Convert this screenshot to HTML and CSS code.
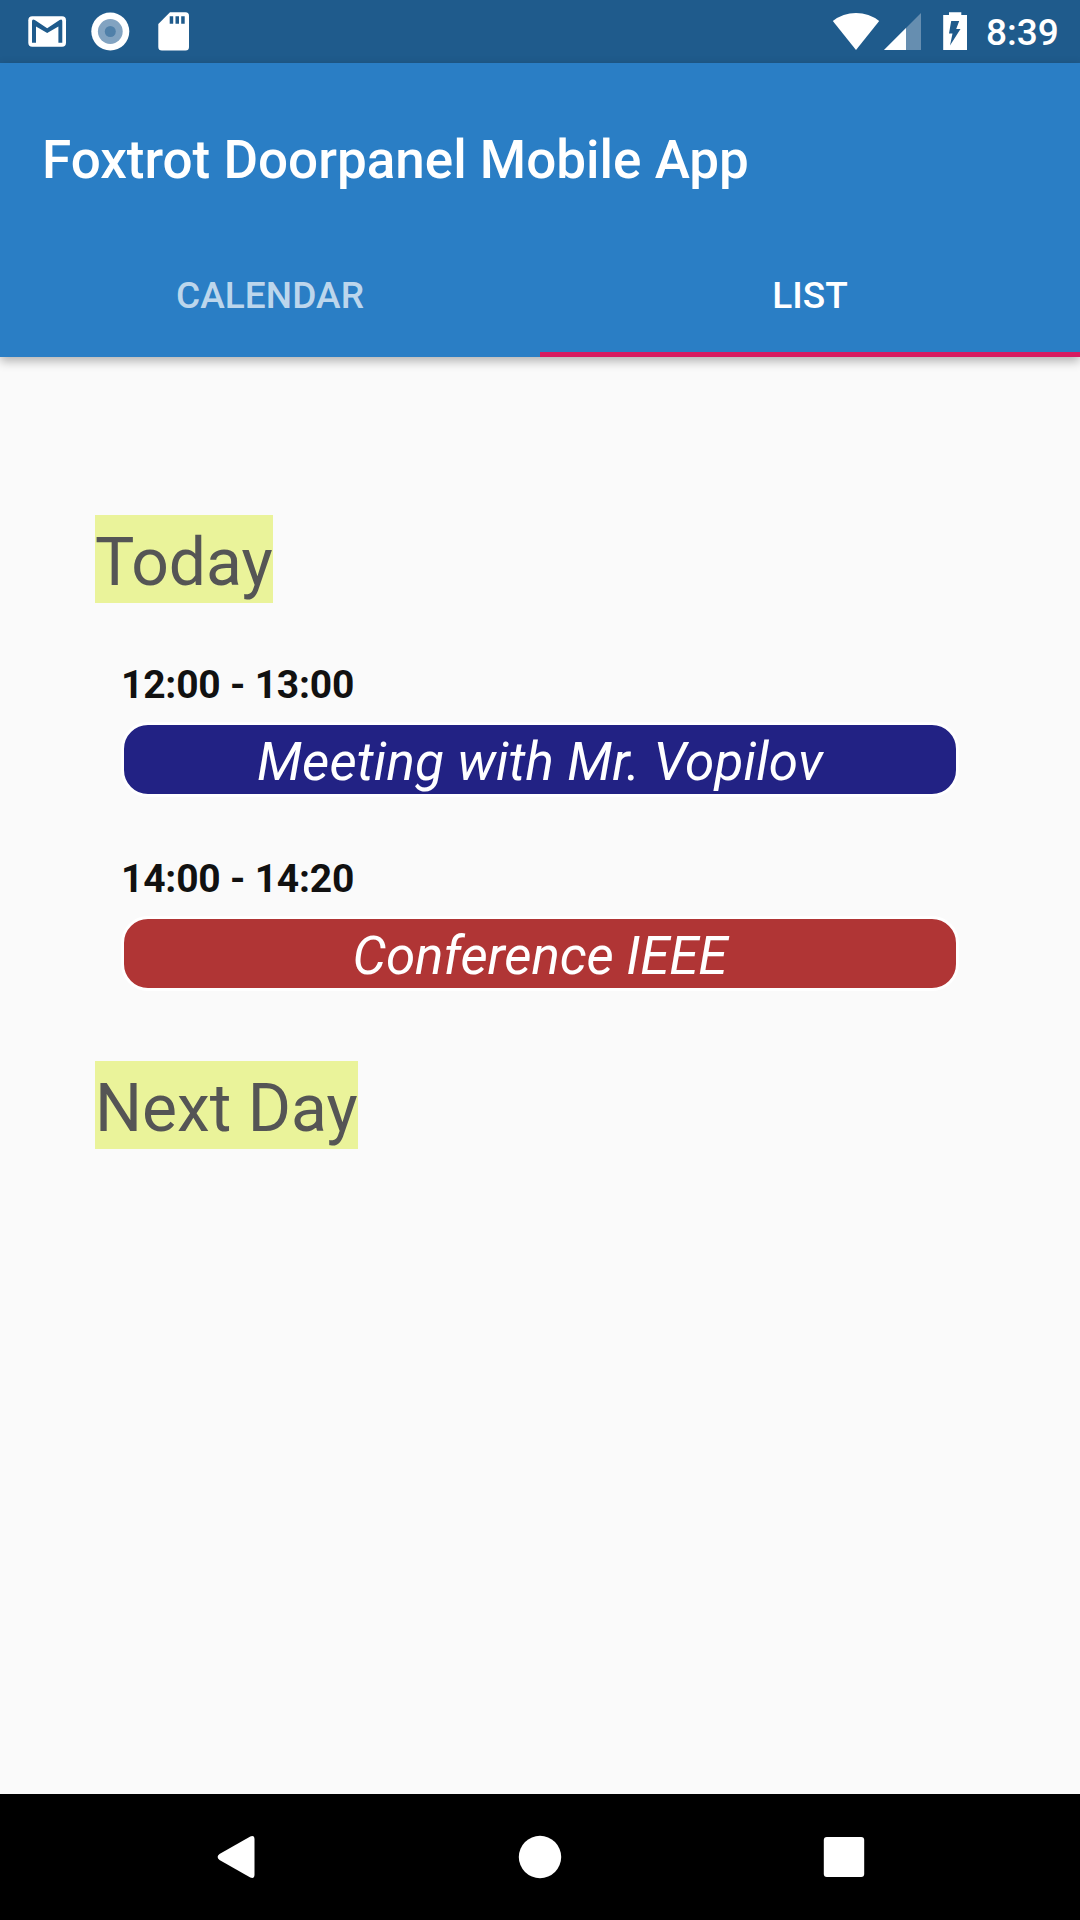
FILE: index.html
```html
<!DOCTYPE html>
<html lang="en">
<head>
<meta charset="utf-8">
<title>Foxtrot Doorpanel Mobile App</title>
<link rel="stylesheet" href="styles.css">
</head>
<body>
<div class="statusbar">
  <svg class="status-left" width="200" height="63" viewBox="0 0 200 63">
    <rect x="28.3" y="16.2" width="37.7" height="30.6" rx="4" fill="#fff"/>
    <path class="cut" d="M32 42.7V21.5Q32 18.4 34.8 20L47.2 28.2L59.6 20Q62.3 18.4 62.3 21.5V42.7H58.4V26.5L47.2 33L36 26.5V42.7Z"/>
    <circle cx="110.3" cy="31.5" r="19" fill="#fff"/>
    <circle cx="110.3" cy="31.5" r="12.4" fill="#82a3c1"/>
    <circle cx="110.3" cy="31.5" r="5.5" fill="#5080a9"/>
    <path d="M170 12.3H185.5Q189 12.3 189 15.8V47Q189 50.5 185.5 50.5H162Q158.300 50.5 158.300 47V24Z" fill="#fff"/>
    <path class="cut" d="M169.700 16.200h3.500v7.500h-3.500zM175.500 16.200h3.500v7.500h-3.500zM181.200 16.200h3.500v7.500h-3.500z"/>
  </svg>
  <div class="status-right">
    <svg width="140" height="63" viewBox="830 0 140 63">
      <path d="M856 50L832.800 21Q843 13 856 13T879.200 21Z" fill="#fff"/>
      <path d="M884 50L921 13V50Z" fill="#668eb0"/>
      <path d="M884 50L906 28V50Z" fill="#fff"/>
      <path d="M943.200 15H949V12.200H961.300V15H967V50H943.200Z" fill="#fff"/>
      <path class="cut" d="M951.200 21H959.200L956.200 29H960.500L950 45.500L952.500 33.500H949Z"/>
    </svg>
    <span class="clock">8:39</span>
  </div>
</div>
<header class="appbar">
  <h1 class="title">Foxtrot Doorpanel Mobile App</h1>
  <nav class="tabs">
    <span class="tab">CALENDAR</span>
    <span class="tab active">LIST</span>
  </nav>
</header>
<main class="agenda">
  <h2 class="day">Today</h2>
  <section class="event">
    <div class="time">12:00 - 13:00</div>
    <div class="pill blue">Meeting with Mr. Vopilov</div>
  </section>
  <section class="event">
    <div class="time">14:00 - 14:20</div>
    <div class="pill red">Conference IEEE</div>
  </section>
  <h2 class="day next">Next Day</h2>
</main>
<footer class="navbar">
  <svg width="1080" height="126" viewBox="0 1794 1080 126" fill="#fff">
    <path d="M250.300 1836.500Q254.500 1834.800 254.500 1839.500V1874.500Q254.500 1879.300 250.300 1877.500L219.500 1860Q215.700 1857 219.500 1854Z"/>
    <circle cx="540" cy="1857" r="21.200"/>
    <rect x="823.800" y="1837" width="40.400" height="40" rx="3"/>
  </svg>
</footer>
</body>
</html>
```

FILE: styles.css
```css
* { box-sizing: border-box; }

body {
  margin: 0;
  width: 1080px;
  height: 1920px;
  display: flex;
  flex-direction: column;
  background: #fafafa;
  font-family: Roboto, sans-serif;
  overflow: hidden;
}

svg { display: block; }

.statusbar {
  height: 63px;
  flex: none;
  display: flex;
  justify-content: space-between;
  background: #1f5b8c;
}

.cut { fill: #1f5b8c; }

.status-right {
  display: flex;
  width: 250px;
}

.clock {
  margin-left: 16px;
  font-size: 37px;
  font-weight: 500;
  line-height: 66px;
  color: #fff;
}

.appbar {
  height: 294px;
  flex: none;
  display: flex;
  flex-direction: column;
  background: #2a7ec5;
  color: #fff;
  box-shadow: 0 4px 10px rgba(0, 0, 0, 0.3);
}

.title {
  margin: 0;
  padding-left: 42px;
  height: 168px;
  font-size: 53px;
  font-weight: 500;
  line-height: 194px;
  white-space: nowrap;
}

.tabs {
  display: flex;
  height: 126px;
}

.tab {
  flex: 1;
  text-align: center;
  font-size: 37px;
  font-weight: 500;
  line-height: 129px;
  letter-spacing: 0.1px;
  color: rgba(255, 255, 255, 0.7);
}

.tab.active {
  color: #fff;
  letter-spacing: 0;
  border-bottom: 5px solid #d81b60;
}

.agenda {
  flex: 1;
  padding: 158px 121px 0 95px;
  display: flex;
  flex-direction: column;
  align-items: flex-start;
}

.day {
  margin: 0;
  height: 88px;
  font-size: 66px;
  font-weight: 400;
  line-height: 95px;
  color: #555;
  background: #eaf39a;
}

.event {
  align-self: stretch;
  margin-left: 26px;
  padding-top: 57px;
}

.time {
  height: 62px;
  font-size: 39px;
  font-weight: 700;
  line-height: 50px;
  letter-spacing: -0.2px;
  color: #111;
}

.pill {
  height: 75px;
  border: 3px solid #fff;
  border-radius: 27px;
  text-align: center;
  font-size: 53px;
  font-style: italic;
  line-height: 74px;
  color: #fff;
}

.blue {
  background: #222284;
  letter-spacing: 0.14px;
}

.red {
  background: #b03535;
  letter-spacing: -0.15px;
}

.next { margin-top: 70px; }

.navbar {
  height: 126px;
  flex: none;
  background: #000;
}
```
